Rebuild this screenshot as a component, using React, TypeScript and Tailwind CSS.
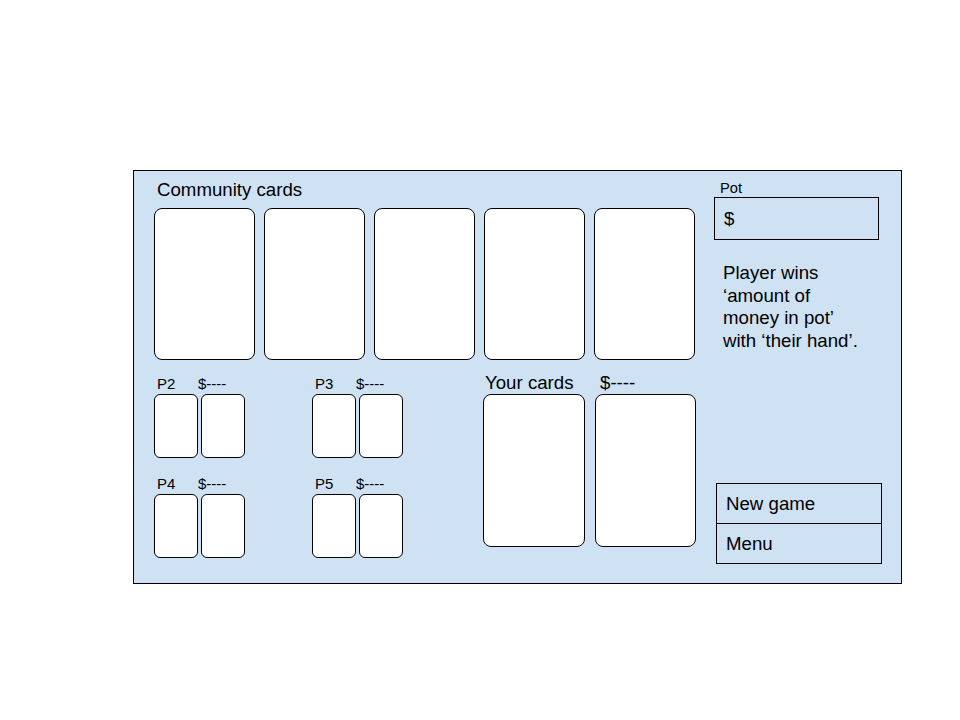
import React from "react";

const font = { fontFamily: '"Liberation Sans", Arial, sans-serif' };

const community = [0, 1, 2, 3, 4];
const others = ["P2", "P3", "P4", "P5"];

function PlayerHand({ name }: { name: string }) {
   return (
      <div className="flex flex-col">
         <div className="flex h-[20px] text-[15px] leading-[20px] text-black">
            <span className="w-[44px] pl-[3px]">{name}</span>
            <span>$----</span>
         </div>
         <div className="flex gap-[3px]">
            <div className="h-[64px] w-[44px] rounded-[6px] border border-black bg-white" />
            <div className="h-[64px] w-[44px] rounded-[6px] border border-black bg-white" />
         </div>
      </div>
   );
}

export default function App() {
   return (
      <div
         className="h-[720px] w-[960px] overflow-hidden bg-white pl-[133px] pt-[170px] text-black"
         style={font}
      >
         <section className="flex h-[414px] w-[769px] border border-black bg-[#cfe2f3] pl-[20px] pr-[18px] pt-[9px]">
            {/* table */}
            <div className="flex w-[542px] flex-none flex-col">
               <p className="h-[20px] pl-[3px] text-[18.67px] leading-[20px]">
                  Community cards
               </p>
               <div className="mt-[8px] flex gap-[9px]">
                  {community.map(i => (
                     <div
                        key={i}
                        className="h-[152px] w-[101px] rounded-[8px] border border-black bg-white"
                     />
                  ))}
               </div>

               <div className="mt-[11px] flex items-start">
                  <div className="grid grid-cols-[158px_91px] gap-y-[16px] pt-[3px]">
                     {others.map(p => (
                        <PlayerHand key={p} name={p} />
                     ))}
                  </div>

                  <div className="ml-[80px] flex flex-col">
                     <div className="flex h-[23px] text-[18.67px] leading-[23px]">
                        <span className="w-[117px] pl-[2px]">Your cards</span>
                        <span>$----</span>
                     </div>
                     <div className="flex gap-[10px]">
                        <div className="h-[153px] w-[102px] rounded-[8px] border border-black bg-white" />
                        <div className="h-[153px] w-[101px] rounded-[8px] border border-black bg-white" />
                     </div>
                  </div>
               </div>
            </div>

            {/* side panel */}
            <div className="ml-[18px] flex w-[168px] flex-none flex-col">
               <p className="h-[16px] pl-[6px] text-[14.67px] leading-[16px]">Pot</p>
               <div className="mt-[1px] flex h-[43px] w-[165px] items-center border border-black pl-[9px] text-[18.67px]">
                  $
               </div>
               <p className="mt-[22px] pl-[9px] text-[18.67px] leading-[22.5px]">
                  Player wins
                  <br />
                  ‘amount of
                  <br />
                  money in pot’
                  <br />
                  with ‘their hand’.
               </p>

               <div className="mb-[19px] ml-[2px] mt-auto w-[166px] border border-black text-[18.67px]">
                  <div className="flex h-[40px] items-center border-b border-black pl-[9px]">
                     New game
                  </div>
                  <div className="flex h-[39px] items-center pl-[9px]">Menu</div>
               </div>
            </div>
         </section>
      </div>
   );
}
